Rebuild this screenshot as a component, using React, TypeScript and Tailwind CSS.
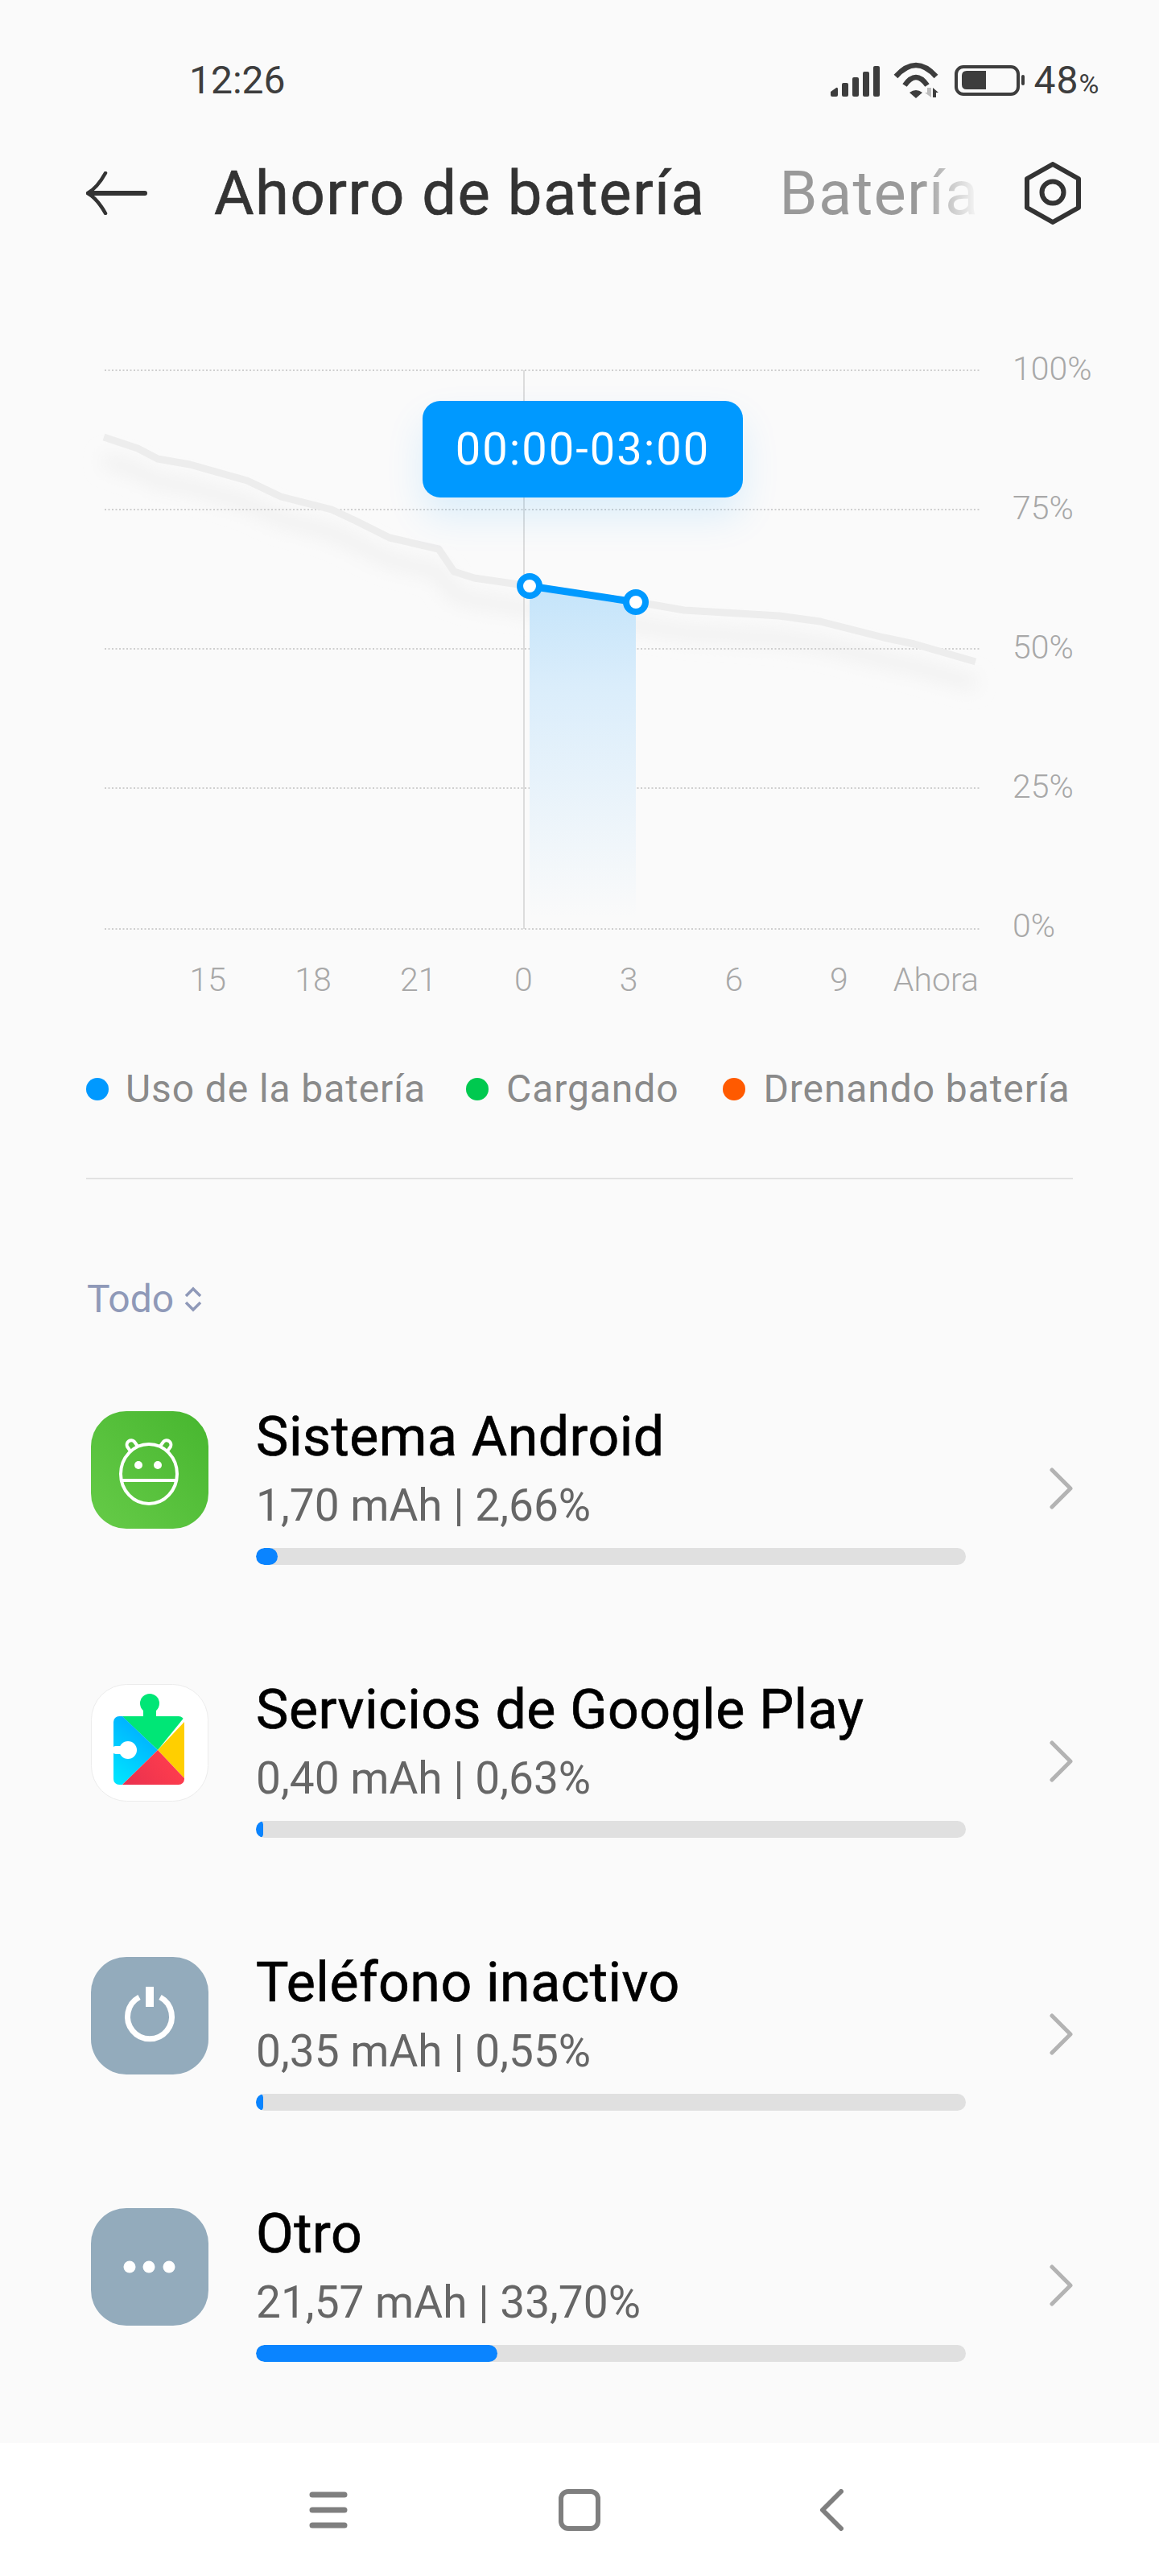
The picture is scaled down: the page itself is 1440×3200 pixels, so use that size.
import React from "react";

const greyLine =
  "129,543 171,557 196,570 236,577 307,597 349,617 412,633 442,647 484,668 545,682 564,710 589,718 658,728 790,748 804,750 850,758 968,765 1019,772 1098,792 1136,800 1212,822";

const yLabels = ["100%", "75%", "50%", "25%", "0%"];
const xLabels = ["15", "18", "21", "0", "3", "6", "9"];

function StatusIcons() {
  return (
    <svg width="250" height="50" viewBox="1030 75 250 50" className="shrink-0">
      <g fill="#3d3d3d">
        <path d="M1034 114 l7-5 q2-1 2 2 v7 q0 2-2 2 h-5 q-2 0-2-2z" />
        <rect x="1048" y="103" width="8" height="17" rx="2" />
        <rect x="1061" y="96" width="8" height="24" rx="2" />
        <rect x="1074" y="89" width="8" height="31" rx="2" />
        <rect x="1087" y="82" width="8" height="38" rx="2" />
      </g>
      <g fill="none" stroke="#3d3d3d" strokeWidth="6.5">
        <path d="M1115 95 q25-28 50 0" />
        <path d="M1126 106 q14-20 28 0" />
      </g>
      <path d="M1132 115 q8-6 16 0 l-8 7z" fill="#3d3d3d" />
      <path d="M1154 109 h5 v12 l-8-6 h3z" fill="#bdbdbd" />
      <path d="M1161 121 v-12 l7 6 h-3 v6z" fill="#3d3d3d" />
      <rect x="1190" y="83" width="77" height="34" rx="9" fill="none" stroke="#3d3d3d" strokeWidth="4" />
      <path d="M1203 88 h24 v23 h-24 q-6 0-6-6 v-11 q0-6 6-6z" fill="#3d3d3d" />
      <rect x="1271" y="93" width="4" height="13" rx="2" fill="#3d3d3d" />
    </svg>
  );
}

function AndroidIcon() {
  return (
    <svg viewBox="0 0 146 146" className="w-[146px] h-[146px]">
      <defs>
        <linearGradient id="grn" x1="0" y1="1" x2="1" y2="0">
          <stop offset="0" stopColor="#66cb48" />
          <stop offset="1" stopColor="#47b62f" />
        </linearGradient>
      </defs>
      <rect width="146" height="146" rx="44" fill="url(#grn)" />
      <g fill="none" stroke="#fff" strokeWidth="4" strokeLinejoin="round">
        <ellipse cx="72" cy="78" rx="35" ry="37" />
        <path d="M37 86 H107" />
        <path d="M50 51 L45 44 A5.5 5.5 0 0 1 54 38 L59 45" />
        <path d="M94 51 L99 44 A5.5 5.5 0 0 0 90 38 L85 45" />
      </g>
      <circle cx="59" cy="67" r="5" fill="#fff" />
      <circle cx="83" cy="67" r="5" fill="#fff" />
    </svg>
  );
}

function PlayIcon() {
  return (
    <svg viewBox="0 0 146 146" className="w-[146px] h-[146px]">
      <defs>
        <linearGradient id="blu" x1="0.6" y1="0.1" x2="0.2" y2="1">
          <stop offset="0" stopColor="#00aaff" />
          <stop offset="1" stopColor="#00e4ff" />
        </linearGradient>
        <linearGradient id="red" x1="0" y1="1" x2="1" y2="0.6">
          <stop offset="0" stopColor="#e8304f" />
          <stop offset="1" stopColor="#ff3d4d" />
        </linearGradient>
        <clipPath id="body">
          <rect x="28" y="40" width="88" height="85" rx="7" />
        </clipPath>
      </defs>
      <rect x="0.5" y="0.5" width="145" height="145" rx="44" fill="#fff" stroke="#ececec" />
      <circle cx="73" cy="24" r="12" fill="#00e676" />
      <rect x="65" y="28" width="16" height="14" fill="#00e676" />
      <g clipPath="url(#body)">
        <polygon points="28,30 125,30 83,82" fill="#00e676" />
        <polygon points="28,30 39,40 83,82 39,125 28,125" fill="url(#blu)" />
        <polygon points="116,47 116,117 83,82" fill="#ffcf00" />
        <polygon points="83,82 116,117 116,125 39,125" fill="url(#red)" />
      </g>
      <circle cx="46" cy="82" r="11" fill="#fff" />
      <rect x="26" y="77" width="18" height="10" rx="5" fill="#fff" />
    </svg>
  );
}

function PowerIcon() {
  return (
    <svg viewBox="0 0 146 146" className="w-[146px] h-[146px]">
      <rect width="146" height="146" rx="44" fill="#93abbc" />
      <path d="M60 50 A27.5 27.5 0 1 0 86 50" fill="none" stroke="#fff" strokeWidth="7" />
      <rect x="68" y="37" width="10" height="25" fill="#fff" />
    </svg>
  );
}

function DotsIcon() {
  return (
    <svg viewBox="0 0 146 146" className="w-[146px] h-[146px]">
      <rect width="146" height="146" rx="44" fill="#93abbc" />
      <circle cx="48" cy="73" r="7.5" fill="#fff" />
      <circle cx="72" cy="73" r="7.5" fill="#fff" />
      <circle cx="97" cy="73" r="7.5" fill="#fff" />
    </svg>
  );
}

const rows = [
  { name: "Sistema Android", usage: "1,70 mAh | 2,66%", fill: "w-[27px]", icon: <AndroidIcon />, height: "h-[339px]" },
  { name: "Servicios de Google Play", usage: "0,40 mAh | 0,63%", fill: "w-[9px]", icon: <PlayIcon />, height: "h-[339px]" },
  { name: "Teléfono inactivo", usage: "0,35 mAh | 0,55%", fill: "w-[9px]", icon: <PowerIcon />, height: "h-[312px]" },
  { name: "Otro", usage: "21,57 mAh | 33,70%", fill: "w-[300px]", icon: <DotsIcon />, height: "h-[250px]" },
];

function Chart() {
  return (
    <div className="relative h-[800px] w-[1440px]">
      <svg viewBox="0 440 1440 800" className="absolute inset-0 w-[1440px] h-[800px]">
        <defs>
          <linearGradient id="area" x1="0" y1="0" x2="0" y2="1">
            <stop offset="0" stopColor="#c4e4fa" />
            <stop offset="0.3" stopColor="#daedfb" />
            <stop offset="1" stopColor="#fafafa" />
          </linearGradient>
          <filter id="soft" x="-5%" y="-30%" width="110%" height="180%">
            <feGaussianBlur stdDeviation="11" />
          </filter>
        </defs>
        <polyline points={greyLine} transform="translate(0 28)" fill="none" stroke="#efefef" strokeWidth="16" filter="url(#soft)" />
        {[460, 633, 806, 979, 1154].map((y) => (
          <line key={y} x1="130" x2="1218" y1={y} y2={y} stroke="#cfcfcf" strokeWidth="2" strokeDasharray="2 2.5" />
        ))}
        <line x1="651" x2="651" y1="460" y2="1154" stroke="#dcdcdc" strokeWidth="2" />
        <polygon points="658,728 790,748 790,1140 658,1140" fill="url(#area)" />
        <polyline points={greyLine} fill="none" stroke="#ededed" strokeWidth="9" strokeLinejoin="round" />
        <line x1="658" y1="728" x2="790" y2="748" stroke="#0099ff" strokeWidth="9" />
        <circle cx="658" cy="728" r="12" fill="#fff" stroke="#0099ff" strokeWidth="8" />
        <circle cx="790" cy="748" r="12" fill="#fff" stroke="#0099ff" strokeWidth="8" />
      </svg>
      <div className="absolute left-[525px] top-[58px] flex h-[120px] w-[398px] items-center justify-center rounded-[22px] bg-[#0099ff] text-[56px] tracking-[2px] text-white shadow-[0_24px_48px_rgba(0,153,255,0.12)]">
        00:00-03:00
      </div>
      <div className="absolute left-[1258px] top-0 flex h-[728px] flex-col justify-between text-[41px] font-light leading-[36px] text-[#a8a8a8]">
        {yLabels.map((label) => (
          <span key={label}>{label}</span>
        ))}
      </div>
      <div className="absolute left-[193px] top-[752px] flex text-[41px] font-light leading-[50px] text-[#a8a8a8]">
        {xLabels.map((label) => (
          <span key={label} className="w-[130.7px] text-center">
            {label}
          </span>
        ))}
        <span className="ml-[2px]">Ahora</span>
      </div>
    </div>
  );
}

export default function App() {
  return (
    <div className="flex h-[3200px] w-[1440px] flex-col bg-[#fafafa] font-['Roboto',sans-serif]">
      <div className="flex h-[160px] items-start pt-[75px]">
        <span className="ml-[235px] text-[48px] leading-[50px] text-[#3d3d3d]">12:26</span>
        <div className="ml-[673px]">
          <StatusIcons />
        </div>
        <span className="ml-[7px] text-[48px] leading-[50px] tracking-[1px] text-[#3d3d3d]">
          48<span className="text-[34px]">%</span>
        </span>
      </div>

      <div className="flex h-[160px] items-center">
        <svg width="78" height="54" viewBox="0 0 78 54" className="ml-[107px]">
          <path d="M24 2 Q14 20 2 27 Q14 34 24 52" fill="none" stroke="#333" strokeWidth="4.5" strokeLinecap="round" />
          <path d="M4 27 H73" stroke="#333" strokeWidth="6" strokeLinecap="round" />
        </svg>
        <h1 className="ml-[81px] text-[76px] font-normal tracking-[1.5px] text-[#333] [-webkit-text-stroke:0.7px_#333]">Ahorro de batería</h1>
        <span className="ml-[92px] bg-gradient-to-r from-[#999] from-70% to-[#fafafa] bg-clip-text text-[76px] tracking-[1.2px] text-transparent">
          Batería
        </span>
        <svg width="72" height="78" viewBox="0 0 72 78" className="ml-[55px]">
          <path d="M36 3 L68 21 V57 L36 75 L4 57 V21 Z" fill="none" stroke="#333" strokeWidth="6" strokeLinejoin="round" />
          <circle cx="36" cy="38" r="13.5" fill="none" stroke="#333" strokeWidth="6" />
        </svg>
      </div>

      <div className="mt-[120px]">
        <Chart />
      </div>

      <div className="mt-[83px] flex h-[60px] items-center text-[48px] tracking-[0.9px] text-[#8a8a8a]">
        <span className="ml-[107px] h-[28px] w-[28px] rounded-full bg-[#0099ff]" />
        <span className="ml-[21px]">Uso de la batería</span>
        <span className="ml-[50px] h-[28px] w-[28px] rounded-full bg-[#00c94f]" />
        <span className="ml-[22px]">Cargando</span>
        <span className="ml-[55px] h-[28px] w-[28px] rounded-full bg-[#ff5a00]" />
        <span className="ml-[22px]">Drenando batería</span>
      </div>

      <div className="mx-[107px] mt-[80px] h-[2px] bg-[#e2e2e2]" />

      <div className="ml-[108px] mt-[119px] flex h-[60px] items-center gap-[13px] text-[48px] text-[#8f99b8]">
        Todo
        <svg width="22" height="32" viewBox="0 0 22 32" fill="none" stroke="#8f99b8" strokeWidth="3.5">
          <path d="M2 12 L11 3 L20 12" />
          <path d="M2 20 L11 29 L20 20" />
        </svg>
      </div>

      <div className="mt-[109px]">
        {rows.map((row) => (
          <div key={row.name} className={`flex items-start ${row.height}`}>
            <div className="ml-[113px] w-[146px]">{row.icon}</div>
            <div className="ml-[59px] w-[882px]">
              <div className="-mt-[8px] text-[68px] leading-[80px] tracking-[0.5px] text-black [-webkit-text-stroke:0.7px_#000]">{row.name}</div>
              <div className="mt-[10px] text-[55px] leading-[70px] text-[#666]">{row.usage}</div>
              <div className="mt-[18px] h-[21px] overflow-hidden rounded-full bg-[#e0e0e0]">
                <div className={`h-[21px] rounded-full bg-[#0a84ff] ${row.fill}`} />
              </div>
            </div>
            <svg width="32" height="52" viewBox="0 0 32 52" fill="none" stroke="#b3b3b3" strokeWidth="5" strokeLinecap="round" strokeLinejoin="round" className="ml-[102px] mt-[70px]">
              <path d="M5 3 L28 26 L5 49" />
            </svg>
          </div>
        ))}
      </div>

      <div className="mt-auto flex h-[165px] items-center justify-center bg-white">
        <div className="flex w-[312px] justify-center">
          <svg width="48" height="48" viewBox="0 0 48 48" stroke="#7f7f7f" strokeWidth="7" strokeLinecap="round">
            <path d="M4 5 H44 M4 24 H44 M4 43 H44" />
          </svg>
        </div>
        <div className="flex w-[312px] justify-center">
          <div className="h-[52px] w-[52px] rounded-[12px] border-[6px] border-[#7f7f7f]" />
        </div>
        <div className="flex w-[312px] justify-center">
          <svg width="32" height="52" viewBox="0 0 32 52" fill="none" stroke="#7f7f7f" strokeWidth="6" strokeLinecap="round" strokeLinejoin="round">
            <path d="M29 3 L6 26 L29 49" />
          </svg>
        </div>
      </div>
    </div>
  );
}
